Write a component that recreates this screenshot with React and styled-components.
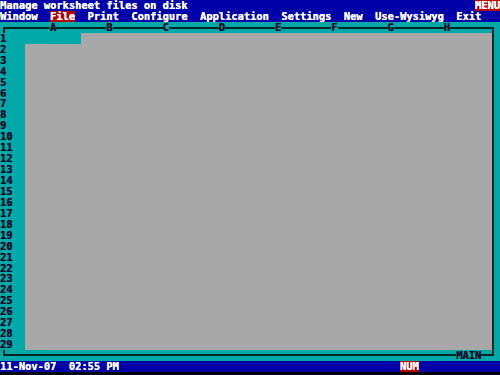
import React from "react";
import styled, { createGlobalStyle } from "styled-components";

// one text cell of the 80x34 screen
const CH = 6.25;
const LH = 10.9375;

const BLUE = "#0000a8";
const TEAL = "#00a8a8";
const GRAY = "#a8a8a8";
const RED = "#b40000";
const INK = "#0c0c28";
const RULE = "#062626";

const columns = ["A", "B", "C", "D", "E", "F", "G", "H"];
const menu = ["Window", "File", "Print", "Configure", "Application", "Settings", "New", "Use-Wysiwyg", "Exit"];
const rows = Array.from({ length: 29 }, (_, i) => i + 1);

const GlobalStyle = createGlobalStyle`
  html, body {
    margin: 0;
    padding: 0;
    background: #000;
  }
`;

export default function App() {
  return (
    <>
      <GlobalStyle />
      <Screen>
        <TitleBar>
          <span>Manage worksheet files on disk</span>
          <Badge $cols={4}>MENU</Badge>
        </TitleBar>
        <MenuBar>
          {menu.map((m) => (
            <MenuItem key={m} $cols={m.length} $active={m === "File"}>
              {m}
            </MenuItem>
          ))}
        </MenuBar>

        <Sheet>
          <HeaderLine>
            <TopLeft />
            {columns.map((c) => (
              <ColHead key={c} $w={9 * CH}>
                <ColLabel>{c}</ColLabel>
              </ColHead>
            ))}
            <ColHead $w={17} />
            <TopRight />
          </HeaderLine>

          {rows.map((r) => (
            <Row key={r}>
              <RowNum>{r}</RowNum>
              <Cells>{r === 1 && <Cursor />}</Cells>
              <RightEdge />
            </Row>
          ))}

          <FootLine>
            <FootRule />
            <ModeLabel>MAIN</ModeLabel>
            <FootEnd />
            <FootPad />
          </FootLine>
        </Sheet>

        <StatusBar>
          <Clock>11-Nov-07  02:55 PM</Clock>
          <Badge $cols={3}>NUM</Badge>
        </StatusBar>
      </Screen>
    </>
  );
}

const Screen = styled.div`
  width: 500px;
  height: 375px;
  overflow: hidden;
  background: #000;
  display: flex;
  flex-direction: column;
  font-family: "DejaVu Sans Mono", "Liberation Mono", monospace;
  font-weight: bold;
  font-size: 10.38px;
  line-height: ${LH}px;
  white-space: pre;
  text-shadow: 0.35px 0 currentColor;
`;

const TitleBar = styled.div`
  display: flex;
  justify-content: space-between;
  height: ${LH}px;
  background: ${BLUE};
  color: #fff;
`;

const Badge = styled.span`
  width: ${(p) => p.$cols * CH}px;
  background: ${RED};
  color: #fff;
`;

const MenuBar = styled.div`
  display: flex;
  gap: ${2 * CH}px;
  height: ${LH}px;
  background: ${BLUE};
  color: #fff;
`;

const MenuItem = styled.span`
  width: ${(p) => p.$cols * CH}px;
  background: ${(p) => (p.$active ? RED : "transparent")};
`;

const Sheet = styled.div`
  display: flex;
  flex-direction: column;
  background: ${TEAL};
  color: ${INK};
`;

const HeaderLine = styled.div`
  display: flex;
  height: ${LH}px;
`;

const TopLeft = styled.div`
  width: ${4 * CH}px;
  display: flex;
  padding: 5px 0 0 3px;
  box-sizing: border-box;
  &::after {
    content: "";
    flex: 1;
    border-top: 2px solid ${RULE};
    border-left: 2px solid ${RULE};
  }
`;

const ColHead = styled.div`
  width: ${(p) => p.$w}px;
  display: flex;
  &::before,
  &::after {
    content: "";
    flex: 1;
    height: 0;
    margin-top: 5px;
    border-top: 2px solid ${RULE};
  }
`;

const ColLabel = styled.span`
  width: ${CH}px;
  text-align: center;
`;

const TopRight = styled.div`
  width: 8px;
  display: flex;
  padding-top: 5px;
  box-sizing: border-box;
  &::after {
    content: "";
    width: 2px;
    box-sizing: border-box;
    border-top: 2px solid ${RULE};
    border-right: 2px solid ${RULE};
  }
`;

const Row = styled.div`
  display: flex;
  height: ${LH}px;
`;

const RowNum = styled.span`
  width: ${4 * CH}px;
`;

const Cells = styled.div`
  width: 467px;
  display: flex;
  background: ${GRAY};
`;

const Cursor = styled.div`
  width: ${9 * CH}px;
  background: ${TEAL};
`;

const RightEdge = styled.div`
  width: 8px;
  box-sizing: border-box;
  border-left: 2px solid ${RULE};
`;

const FootLine = styled.div`
  display: flex;
  height: ${LH}px;
`;

const FootRule = styled.div`
  flex: 1;
  display: flex;
  align-items: flex-start;
  padding-left: 3px;
  &::after {
    content: "";
    flex: 1;
    height: 6px;
    box-sizing: border-box;
    border-left: 2px solid ${RULE};
    border-bottom: 2px solid ${RULE};
  }
`;

const ModeLabel = styled.span`
  width: ${4 * CH}px;
`;

const FootEnd = styled.div`
  width: 12.75px;
  display: flex;
  align-items: flex-start;
  &::after {
    content: "";
    flex: 1;
    height: 6px;
    box-sizing: border-box;
    border-right: 2px solid ${RULE};
    border-bottom: 2px solid ${RULE};
  }
`;

const FootPad = styled.div`
  width: 6px;
`;

const StatusBar = styled.div`
  display: flex;
  height: ${LH}px;
  background: ${BLUE};
  color: #fff;
`;

const Clock = styled.span`
  width: ${64 * CH}px;
`;
